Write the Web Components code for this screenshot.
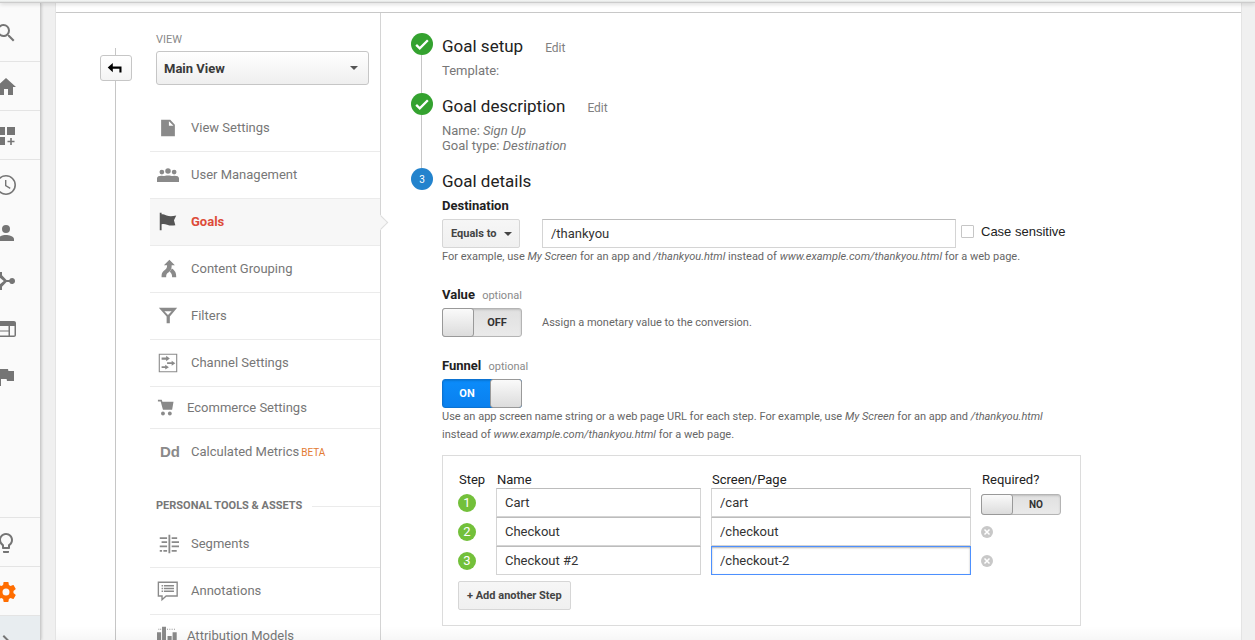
<!DOCTYPE html>
<html lang="en">
<head>
<meta charset="utf-8">
<title>Analytics – Goals</title>
<style>
  body { margin: 0; background: #f0f0f0; font-family: Roboto, "Liberation Sans", sans-serif; color: #222; }
</style>
</head>
<body>
<ga-app></ga-app>
<script>
const ICONS = {
  search: '<path d="M15.5 14h-.79l-.28-.27A6.47 6.47 0 0 0 16 9.5 6.5 6.5 0 1 0 9.5 16c1.61 0 3.09-.59 4.23-1.57l.27.28v.79l5 4.99L20.49 19l-4.99-5zm-6 0C7.01 14 5 11.99 5 9.5S7.01 5 9.5 5 14 7.01 14 9.5 11.99 14 9.5 14z"/>',
  home: '<path d="M10 20v-6h4v6h5v-8h3L12 3 2 12h3v8z"/>',
  dash: '<path d="M3 3h8v8H3zM13 3h8v8h-8zM3 13h8v8H3zM16.2 14h1.6v2.7h2.7v1.6h-2.7V21h-1.6v-2.7h-2.7v-1.6h2.7z"/>',
  clock: '<path d="M11.99 2C6.47 2 2 6.48 2 12s4.47 10 9.99 10C17.52 22 22 17.52 22 12S17.52 2 11.99 2zM12 20.4a8.4 8.4 0 1 1 0-16.8 8.4 8.4 0 0 1 0 16.8z"/><path d="M12.4 7H11v6l4.9 2.9.7-1.2-4.2-2.5z"/>',
  person: '<path d="M12 12a4 4 0 1 0 0-8 4 4 0 0 0 0 8zm0 2c-2.67 0-8 1.34-8 4v2h16v-2c0-2.66-5.33-4-8-4z"/>',
  branch: '<path d="M18 9a3 3 0 0 0-2.8 2h-2.7L8 6.3V3H2v6h4.2l3.6 3-3.6 3H2v6h6v-3.300l4.500-4.700h2.700A3 3 0 1 0 18 9z"/>',
  web: '<path d="M20 4H4c-1.1 0-2 .9-2 2v12c0 1.100.9 2 2 2h16c1.100 0 2-.9 2-2V6c0-1.100-.9-2-2-2zm-5.500 14.500H3.500v-4h11v4zm0-5H3.500V9h11v4.500zm6 5H16V9h4.500v9.500z"/>',
  flag: '<path d="M14.4 6L14 4H5v17h2v-7h5.600l.4 2h7V6z"/>',
  bulb: '<path d="M9 21c0 .55.45 1 1 1h4c.55 0 1-.45 1-1v-1H9v1zm3-19C8.140 2 5 5.140 5 9c0 2.380 1.190 4.470 3 5.740V17c0 .55.45 1 1 1h6c.55 0 1-.45 1-1v-2.260c1.810-1.270 3-3.360 3-5.740 0-3.860-3.140-7-7-7zm2.850 11.100l-.85.6V16h-4v-2.300l-.85-.6A5 5 0 0 1 7 9c0-2.760 2.240-5 5-5s5 2.240 5 5c0 1.630-.8 3.160-2.150 4.100z"/>',
  gear: '<path d="M19.430 12.980c.04-.32.070-.64.070-.98s-.03-.66-.07-.98l2.110-1.650c.19-.15.24-.42.12-.64l-2-3.460c-.12-.22-.39-.3-.61-.22l-2.490 1c-.52-.4-1.080-.73-1.690-.98l-.38-2.650C14.460 2.180 14.250 2 14 2h-4c-.25 0-.46.180-.49.420l-.38 2.650c-.61.250-1.170.590-1.690.980l-2.490-1c-.23-.09-.49 0-.61.220l-2 3.460c-.13.220-.07.490.120.640l2.110 1.650c-.04.320-.07.650-.07.980s.030.660.070.980l-2.110 1.650c-.19.150-.24.420-.12.640l2 3.460c.12.220.39.300.61.220l2.490-1c.52.400 1.080.730 1.690.980l.38 2.650c.03.240.24.420.49.420h4c.25 0 .46-.18.490-.42l.38-2.650c.61-.25 1.170-.59 1.690-.98l2.490 1c.23.090.49 0 .61-.22l2-3.460c.12-.22.070-.49-.12-.64l-2.110-1.650zM12 15.500a3.500 3.500 0 1 1 0-7 3.500 3.500 0 0 1 0 7z"/>',
  chevron: '<path d="M10 6L8.590 7.410 13.170 12l-4.580 4.590L10 18l6-6z"/>',
  page: '<path d="M4.500 3h10L19.500 8.500V21h-15zM13 4.500v5h5z" fill-rule="evenodd"/>',
  users: '<circle cx="12" cy="7.500" r="3"/><circle cx="5.300" cy="8.800" r="2.600"/><circle cx="18.700" cy="8.800" r="2.600"/><path d="M0 19.500v-4c0-2 2-2.800 5-2.800l2 .5c2-1 8-1 10 0l2-.5c3 0 5 .8 5 2.800v4z"/>',
  goal: '<path d="M3 2h2v1.500c2 0 3.500.5 5.500 1.300 3 1.200 6 .9 10.500.2l-2.500 5 1.500 5.500c-4 .7-6 .4-9-.6-2.500-.8-4-.9-6-.4V21H3z"/>',
  merge: '<path d="M13.500 2l6 6h-3.500c0 5-1.500 6.500-4 8.200C10.300 17.400 10 18.500 10 21H5c0-4 .5-5.500 3.500-7.800C10.500 11.600 11 10.500 11 8H7.500z"/><path d="M16.200 11.500c3.800 2.500 4.800 4.800 4.800 9.500h-4.500c0-2.800-.5-4.200-2.500-6z"/>',
  filter: '<path d="M2 3h20l-8 9.500V20h-3.500v-7.500zM8 6.700l4 4.200 4-4.200z" fill-rule="evenodd"/>',
  channel: '<path d="M2.500 2.500h19v19h-19z" fill="none" stroke="currentColor" stroke-width="1.200"/><path d="M5 6h5V4l4 3-4 3V8.500H5zM11 11.200h5V9.500l4 2.700-4 2.700v-1.700h-5zM5 15.500h4v-1.700l4 2.700-4 2.700v-1.700H5z"/>',
  cart: '<path d="M1 3h4.200l.7 2.200H18L16.500 14H6.500L4 5H1z"/><circle cx="6.500" cy="18" r="2.100"/><circle cx="14" cy="18" r="2.100"/>',
  segments: '<path d="M12.500 2h2v20h-2zM3 4.500h8v2H3zM5 9h6v2H5zM3 13.500h8v2H3zM7 18.500h4v2H7zM3 18.500h2.500v2H3zM16 4.500h6v2h-6zM16 9h8v2h-8zM16 13.500h8v2h-8zM16 18.500h5.500v2H16z"/>',
  note: '<path d="M1.500 2.500h20.500v15H10l-4.500 4v-4h-4z" fill="none" stroke="currentColor" stroke-width="1.500"/><path d="M5 5.500h1.500V7H5zM7.500 5.500h11V7h-11zM5 8.500h1.500V10H5zM7.500 8.500h11V10h-11zM5 11.500h1.500V13H5zM7.500 11.500h11V13h-11z"/>',
  bars: '<path d="M0 8h4.500v16H0zM5.500 2h4.300v22H5.500zM11.500 12H16v12h-4.500zM17 8h4.500v16H17zM1.500 4h1v1.200h-1zM3.500 4h1v1.200h-1zM11 4h1v1.200h-1zM13.500 4h1v1.200h-1zM16 4h1v1.200h-1zM18.500 4h1v1.200h-1z"/>',
  back: '<path d="M3 11.500l5.500-5v3.800H18V17h-2.300v-4.300H8.500v3.800z"/>',
  check: '<path d="M5 13l4.300 4.200 9.700-9.700" fill="none" stroke="currentColor" stroke-width="2.800"/>',
  close: '<circle cx="12" cy="12" r="12" fill="#c8c8c8"/><path d="M7 7l10 10M17 7L7 17" stroke="#fff" stroke-width="3"/>'
};
const icon = (name, size) =>
  `<svg viewBox="0 0 24 24" width="${size}" height="${size}" fill="currentColor" aria-hidden="true">${ICONS[name] || ''}</svg>`;

function define(name, render) {
  customElements.define(name, class extends HTMLElement {
    connectedCallback() {
      if (this.shadowRoot) return;
      const tpl = document.createElement('template');
      tpl.innerHTML = '<style>*{box-sizing:border-box}svg{display:block}button,input,select{font-family:inherit}</style>' + render(this);
      this.attachShadow({ mode: 'open' }).appendChild(tpl.content.cloneNode(true));
    }
  });
}

define('ga-rail-item', el => `
<style>
  :host { display: block; flex: none; border-bottom: 1px solid transparent; }
  :host([line]) { border-color: #e4e4e4; }
  :host([plain]) { border: 0; }
  a { display: flex; align-items: center; height: 48px; padding-top: 2px; color: #757575; }
  :host([tall]) a { height: 58px; }
  :host([active]) a { color: #ff6d00; }
  svg { flex: none; margin-left: -6px; }
</style>
<a href="#" aria-label="${el.getAttribute('label')}">${icon(el.getAttribute('icon'), 24)}</a>`);

define('ga-rail', () => `
<style>
  :host { display: flex; flex-direction: column; overflow: hidden; background: #fafafa; border-right: 1px solid #ccc; box-shadow: 0 0 3px rgba(0,0,0,.25); }
  .space { flex: 1; border-bottom: 1px solid #e4e4e4; }
  .expand { flex: none; height: 24px; overflow: hidden; background: #e8edf0; }
</style>
<ga-rail-item icon="search" label="Search" tall line></ga-rail-item>
<ga-rail-item icon="home" label="Home" line></ga-rail-item>
<ga-rail-item icon="dash" label="Customization" line></ga-rail-item>
<ga-rail-item icon="clock" label="Real-time" plain></ga-rail-item>
<ga-rail-item icon="person" label="Audience" plain></ga-rail-item>
<ga-rail-item icon="branch" label="Acquisition" plain></ga-rail-item>
<ga-rail-item icon="web" label="Behavior" plain></ga-rail-item>
<ga-rail-item icon="flag" label="Conversions" plain></ga-rail-item>
<div class="space"></div>
<ga-rail-item icon="bulb" label="Discover" line></ga-rail-item>
<ga-rail-item icon="gear" label="Admin" line active></ga-rail-item>
<div class="expand"><ga-rail-item icon="chevron" label="Expand" plain></ga-rail-item></div>`);

define('ga-tree', () => `
<style>
  :host { display: flex; flex-direction: column; align-items: center; width: 94px; padding: 35px 0 0 26px; }
  .line { width: 2px; border-left: 1px solid #c6c6c6; height: 7px; }
  .rest { flex: 1; }
  button { display: flex; align-items: center; justify-content: center; width: 32px; height: 26px; padding: 0; border: 1px solid #c6c6c6; border-radius: 3px; background: linear-gradient(#fff, #f4f4f4); color: #000; }
</style>
<div class="line"></div>
<button aria-label="Back">${icon('back', 22)}</button>
<div class="line rest"></div>`);

define('ga-nav-item', el => `
<style>
  :host { display: block; border-bottom: 1px solid #ebebeb; }
  :host([last]) { border-color: transparent; }
  :host([active]) { background: #f7f7f7; }
  a { position: relative; display: flex; align-items: center; height: 46px; padding-left: 7px; color: #777; font-size: 13px; line-height: 18px; text-decoration: none; }
  .ic { flex: none; width: 34px; color: #8a8a8a; }
  :host([compact]) a { height: 41px; }
  :host([compact]) .ic { width: 30px; }
  :host([active]) a { color: #dd4b39; font-weight: 700; }
  :host([active]) .ic { color: #555; }
  .dd { font: 700 15px/18px "Liberation Sans", sans-serif; padding-left: 3px; }
  .beta { color: #e37b33; font-size: 10px; margin: 2px 0 0 2px; }
  .tip { display: none; position: absolute; right: -6px; top: 18px; width: 11px; height: 11px; transform: rotate(45deg); background: #f7f7f7; border: 1px solid #dedede; border-left-color: transparent; border-bottom-color: transparent; }
  :host([active]) .tip { display: block; }
</style>
<a href="#"><span class="ic">${el.getAttribute('icon') ? icon(el.getAttribute('icon'), 22) : '<span class="dd">Dd</span>'}</span><slot></slot>${el.hasAttribute('beta') ? '<span class="beta">BETA</span>' : ''}<span class="tip"></span></a>`);

define('ga-nav', () => `
<style>
  :host { display: block; width: 231px; border-right: 1px solid #d4d4d4; padding-top: 19px; }
  label { display: block; margin-left: 6px; font-size: 11px; line-height: 16px; color: #8a8a8a; }
  .pick { position: relative; margin: 3px 11px 20px 6px; color: #555; }
  select { appearance: none; display: block; width: 100%; height: 34px; padding: 0 7px; border: 1px solid #c6c6c6; border-radius: 3px; background: linear-gradient(#fff, #efefef); color: #3a3a3a; font-size: 13px; font-weight: 700; }
  .pick svg { position: absolute; right: 11px; top: 15px; }
  h2 { display: flex; align-items: center; margin: 22px 0 7px 6px; font-size: 11px; line-height: 16px; font-weight: 700; color: #777; }
  h2::after { content: ""; flex: 1; margin-left: 10px; border-top: 1px solid #ebebeb; }
</style>
<label for="view">VIEW</label>
<div class="pick"><select id="view"><option>Main View</option></select>
<svg width="8" height="4" viewBox="0 0 8 4" fill="currentColor"><path d="M0 0h8L4 4z"/></svg></div>
<ga-nav-item icon="page">View Settings</ga-nav-item>
<ga-nav-item icon="users">User Management</ga-nav-item>
<ga-nav-item icon="goal" active>Goals</ga-nav-item>
<ga-nav-item icon="merge">Content Grouping</ga-nav-item>
<ga-nav-item icon="filter">Filters</ga-nav-item>
<ga-nav-item icon="channel">Channel Settings</ga-nav-item>
<ga-nav-item icon="cart" compact>Ecommerce Settings</ga-nav-item>
<ga-nav-item beta last>Calculated Metrics</ga-nav-item>
<h2>PERSONAL TOOLS &amp; ASSETS</h2>
<ga-nav-item icon="segments">Segments</ga-nav-item>
<ga-nav-item icon="note">Annotations</ga-nav-item>
<ga-nav-item icon="bars" compact>Attribution Models</ga-nav-item>`);

define('ga-step', el => {
  const n = el.getAttribute('number');
  return `
<style>
  :host { display: grid; grid-template-columns: 22px 1fr; column-gap: 9px; }
  .mark { display: flex; flex-direction: column; align-items: center; }
  .dot { display: flex; align-items: center; justify-content: center; width: 22px; height: 22px; border-radius: 50%; background: #34a22f; color: #fff; font-size: 10px; }
  .dot.now { background: #2383cd; }
  .rule { flex: 1; width: 2px; border-left: 1px solid #c6c6c6; }
  header { display: flex; align-items: center; margin-bottom: 4px; }
  h1 { margin: 0; font-size: 17px; line-height: 26px; font-weight: 400; }
  header a { margin: 3px 0 0 22px; font-size: 12px; line-height: 16px; color: #808080; text-decoration: none; }
  .body { font-size: 13px; line-height: 15px; color: #777; padding-bottom: 15px; }
</style>
<div class="mark"><span class="dot ${n ? 'now' : ''}">${n || icon('check', 20)}</span>${n ? '' : '<span class="rule"></span>'}</div>
<div><header><h1>${el.getAttribute('heading')}</h1>${n ? '' : '<a href="#">Edit</a>'}</header><div class="body"><slot></slot></div></div>`;
});

define('ga-toggle', el => {
  const on = el.hasAttribute('on');
  return `
<style>
  :host { display: block; width: 80px; height: 29px; flex: none; }
  :host([small]) { height: 21px; }
  label { position: relative; display: flex; height: 100%; border: 1px solid #b4b4b4; border-radius: 3px; background: linear-gradient(#e0e0e0, #eaeaea); box-shadow: inset 0 1px 2px rgba(0,0,0,.15); color: #333; font-size: 11px; font-weight: 700; }
  label.on { flex-direction: row-reverse; background: linear-gradient(#0b8cfb, #0a80ee); border-color: #0c73d2; color: #fff; }
  input { appearance: none; position: absolute; inset: 0; margin: 0; }
  .knob { width: 32px; margin: -1px; border: 1px solid #999; border-radius: 3px; background: linear-gradient(#fafafa, #dcdcdc); }
  .text { flex: 1; display: flex; align-items: center; justify-content: center; }
  :host([small]) .text { font-size: 10px; }
</style>
<label class="${on ? 'on' : ''}"><input type="checkbox" role="switch" aria-label="${el.getAttribute('label')}" ${on ? 'checked' : ''}><span class="knob"></span><span class="text">${el.getAttribute('text')}</span></label>`;
});

const FIELD = `
  .field { display: block; width: 100%; height: 29px; padding: 0 8px; border: 1px solid #d4d4d4; border-top-color: #bcbcbc; border-radius: 0; background: #fff; color: #333; font-size: 13px; outline: none; }
  .field.focus { border-color: #4d90fe; box-shadow: inset 0 1px 2px rgba(0,0,0,.3); }
  .btn { height: 29px; border: 1px solid #d6d6d6; border-radius: 2px; background: linear-gradient(#f6f6f6, #f0f0f0); color: #444; font-size: 11px; font-weight: 700; padding: 0 8px; }
`;

const row = (n, name, page, end) => `
<tr><td><span class="num">${n}</span></td>
<td><input class="field" aria-label="Name of step ${n}" value="${name}"></td>
<td><input class="field${n === 3 ? ' focus' : ''}" aria-label="Screen or page of step ${n}" value="${page}"></td>
<td>${end}</td></tr>`;
const removeBtn = n => `<button class="del" aria-label="Remove step ${n}">${icon('close', 12)}</button>`;

define('ga-funnel', () => `
<style>${FIELD}
  :host { display: block; max-width: 639px; border: 1px solid #dcdcdc; padding: 15px; }
  table { width: 100%; border-collapse: collapse; table-layout: fixed; }
  th { height: 17px; padding: 0 0 0 1px; text-align: left; font-size: 13px; line-height: 17px; font-weight: 400; color: #222; }
  td { height: 29px; padding: 0 10px 0 0; }
  th:nth-child(1) { width: 38px; } th:nth-child(2) { width: 215px; } th:nth-child(3) { width: 270px; }
  td:first-child, td:last-child { padding: 0; }
  .num { display: flex; align-items: center; justify-content: center; width: 18px; height: 18px; border-radius: 50%; background: #73c03a; color: #fff; font-size: 13px; }
  .del { display: block; padding: 0; border: 0; background: none; }
  ga-toggle { margin-top: 4px; }
  .btn { display: block; margin-top: 6px; }
</style>
<table>
<thead><tr><th>Step</th><th>Name</th><th>Screen/Page</th><th>Required?</th></tr></thead>
<tbody>
${row(1, 'Cart', '/cart', '<ga-toggle small text="NO" label="Required"></ga-toggle>')}
${row(2, 'Checkout', '/checkout', removeBtn(2))}
${row(3, 'Checkout #2', '/checkout-2', removeBtn(3))}
</tbody></table>
<button class="btn">+ Add another Step</button>`);

define('ga-goal-form', () => `
<style>${FIELD}
  :host { display: block; }
  h3 { margin: 0; font-size: 13px; line-height: 15px; font-weight: 700; color: #222; }
  h3 small { margin-left: 4px; font-size: 11px; font-weight: 400; color: #8a8a8a; }
  h3.block { margin-top: 21px; }
  .row { display: flex; align-items: center; margin-top: 5px; }
  .row.first { margin-top: 6px; }
  .pick { position: relative; width: 78px; margin-right: 22px; color: #444; }
  .pick select { appearance: none; width: 100%; display: block; }
  .pick svg { position: absolute; right: 8px; top: 13px; }
  .dest { flex: 0 1 414px; }
  .case { display: flex; align-items: center; gap: 7px; margin-left: 5px; padding-bottom: 4px; font: 13px/16px "Liberation Sans", sans-serif; color: #222; }
  .case input { appearance: none; width: 13px; height: 13px; margin: 0; border: 1px solid #c6c6c6; border-radius: 1px; background: #fff; }
  p { margin: 0; font-size: 11px; line-height: 18px; color: #666; }
  .row p { margin-left: 20px; }
  .wide { max-width: 639px; }
  ga-funnel { margin-top: 11px; }
</style>
<h3><label for="dest">Destination</label></h3>
<div class="row first">
  <div class="pick"><select class="btn" aria-label="Match type"><option>Equals to</option></select>
  <svg width="8" height="4" viewBox="0 0 8 4" fill="currentColor"><path d="M0 0h8L4 4z"/></svg></div>
  <input class="field dest" id="dest" value="/thankyou">
  <label class="case"><input type="checkbox">Case sensitive</label>
</div>
<p>For example, use <i>My Screen</i> for an app and <i>/thankyou.html</i> instead of <i>www.example.com/thankyou.html</i> for a web page.</p>
<h3 class="block">Value <small>optional</small></h3>
<div class="row"><ga-toggle text="OFF" label="Value"></ga-toggle><p>Assign a monetary value to the conversion.</p></div>
<h3 class="block">Funnel <small>optional</small></h3>
<div class="row"><ga-toggle on text="ON" label="Funnel"></ga-toggle></div>
<p class="wide">Use an app screen name string or a web page URL for each step. For example, use <i>My Screen</i> for an app and <i>/thankyou.html</i> instead of <i>www.example.com/thankyou.html</i> for a web page.</p>
<ga-funnel></ga-funnel>`);

define('ga-app', () => `
<style>
  :host { display: flex; flex-direction: column; height: 100vh; overflow: hidden; }
  .top { position: relative; z-index: 1; flex: none; height: 3px; background: linear-gradient(#f6f8f7, #e0e2e1); border-bottom: 1px solid #ccc; box-shadow: 0 1px 4px rgba(0,0,0,.18); }
  .main { position: relative; flex: 1; min-height: 0; display: grid; grid-template-columns: 41px 1fr; column-gap: 14px; padding-right: 13px; }
  .panel { overflow: hidden; padding-top: 9px; background: #fff; border: solid #e4e4e4; border-width: 0 1px; }
  .cols { display: grid; grid-template-columns: auto auto 1fr; min-height: 100%; border-top: 1px solid #c8c8c8; }
  section { padding: 20px 20px 0 30px; }
  .main::after { content: ""; position: absolute; left: 56px; right: 14px; bottom: 0; height: 14px; background: linear-gradient(transparent, rgba(0,0,0,.03)); pointer-events: none; }
</style>
<div class="top"></div>
<div class="main">
  <ga-rail></ga-rail>
  <div class="panel"><div class="cols">
    <ga-tree></ga-tree>
    <ga-nav></ga-nav>
    <section>
      <ga-step heading="Goal setup">Template:</ga-step>
      <ga-step heading="Goal description">Name: <i>Sign Up</i><br>Goal type: <i>Destination</i></ga-step>
      <ga-step heading="Goal details" number="3"><ga-goal-form></ga-goal-form></ga-step>
    </section>
  </div></div>
</div>`);
</script>
</body>
</html>
